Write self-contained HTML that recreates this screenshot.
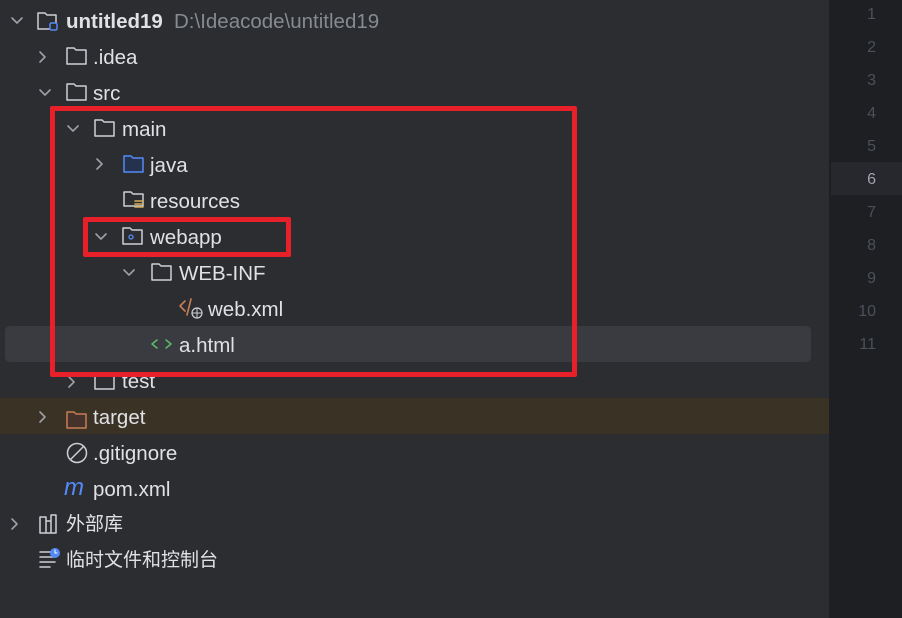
<!DOCTYPE html>
<html><head><style>
body{margin:0;width:902px;height:618px;background:#2b2d30;position:relative;overflow:hidden;font-family:"Liberation Sans","Noto Sans CJK SC",sans-serif;color:#dfe1e5;font-size:20.5px}
.gut{position:absolute;left:829px;top:0;width:73px;height:618px;background:#1e1f22}
.ln{position:absolute;left:829px;width:47px;text-align:right;color:#4b5059;font-size:16px;font-family:"Liberation Sans",sans-serif}
.row{position:absolute;left:0;height:36px;line-height:36px;white-space:nowrap}
.t{position:absolute;top:0}
svg{position:absolute}
</style></head><body>
<div class="gut"></div>
<div style="position:absolute;left:831px;top:162px;width:71px;height:33px;background:#26282e"></div>
<div class="ln" style="top:6px">1</div><div class="ln" style="top:39px">2</div><div class="ln" style="top:72px">3</div><div class="ln" style="top:105px">4</div><div class="ln" style="top:138px">5</div><div class="ln" style="top:171px;color:#a1a3ab">6</div><div class="ln" style="top:204px">7</div><div class="ln" style="top:237px">8</div><div class="ln" style="top:270px">9</div><div class="ln" style="top:303px">10</div><div class="ln" style="top:336px">11</div>
<div style="position:absolute;left:5px;top:326px;width:806px;height:36px;background:#393b40;border-radius:5px"></div>
<div style="position:absolute;left:0;top:398px;width:829px;height:36px;background:#3b3226"></div>

<svg width="829" height="618" style="left:0;top:0" fill="none" stroke-linecap="round" stroke-linejoin="round">
<g stroke="#9da0a8" stroke-width="1.6">
<path d="M12 18l5 5 5-5"/><path d="M40 52l5 5-5 5"/><path d="M40 90l5 5 5-5"/><path d="M68 126l5 5 5-5"/><path d="M97 159l5 5-5 5"/><path d="M96 234l5 5 5-5"/><path d="M124 270l5 5 5-5"/><path d="M69 377l5 5-5 5"/><path d="M40 412l5 5-5 5"/><path d="M12 519l5 5-5 5"/>
</g>
<g stroke="#ced0d6" stroke-width="1.5">
<path d="M38 13h7l2 2h9v14H38z"/>
<path d="M67 48h7l2 2h10v14H67z"/><path d="M67 84h7l2 2h10v14H67z"/>
<path d="M95 120h7l2 2h10v14H95z"/><path d="M124 192h7l2 2h10v12H124z"/><path d="M123 228h7l2 2h10v14H123z"/><path d="M152 264h7l2 2h10v14H152z"/><path d="M95 373h7l2 2h10v14H95z"/>
<circle cx="77" cy="453" r="9.5"/><path d="M71 459l12-12"/>
<path d="M40 517h6v16h-6zM46 521h5v12h-5zM51 515h5v18h-5z"/>
<path d="M40 552h12M40 557h15M40 562h15M40 567h10"/>
</g>
<rect x="50" y="23" width="7" height="7" rx="1.5" stroke="#548af7" stroke-width="1.5" fill="#2b2d30"/>
<path d="M124 156h7l2 2h10v14H124z" stroke="#548af7" stroke-width="1.5" fill="#25324d"/>
<circle cx="131" cy="237" r="2" stroke="#548af7" stroke-width="1.3"/>
<path d="M135 201h8M135 204h8M135 207h8" stroke="#d6ae58" stroke-width="1.6"/>
<path d="M67 412h7l2 2h10v14H67z" stroke="#c77d55" stroke-width="1.5" fill="#45322a"/>
<path d="M185 301l-5 5 5 5M191 299l-4 16" stroke="#c77d55" stroke-width="1.6"/>
<circle cx="197" cy="313" r="5" stroke="#ced0d6" stroke-width="1.2"/><path d="M192 313h10M197 308v10" stroke="#ced0d6" stroke-width="1"/>
<path d="M157 340l-5 4 5 4M166 340l5 4-5 4" stroke="#5fb865" stroke-width="1.6"/>
<circle cx="55" cy="553" r="5" fill="#548af7"/><path d="M55 550v3h2" stroke="#fff" stroke-width="1"/>
</svg>
<div class="row" style="top:4px"><span class="t" style="left:66px;font-weight:bold">untitled19</span><span class="t" style="left:174px;color:#868a91">D:\Ideacode\untitled19</span></div>
<div class="row" style="top:40px"><span class="t" style="left:93px">.idea</span></div>
<div class="row" style="top:76px"><span class="t" style="left:93px">src</span></div>
<div class="row" style="top:112px"><span class="t" style="left:122px">main</span></div>
<div class="row" style="top:148px"><span class="t" style="left:150px">java</span></div>
<div class="row" style="top:184px"><span class="t" style="left:150px">resources</span></div>
<div class="row" style="top:220px"><span class="t" style="left:150px">webapp</span></div>
<div class="row" style="top:256px"><span class="t" style="left:179px">WEB-INF</span></div>
<div class="row" style="top:292px"><span class="t" style="left:208px">web.xml</span></div>
<div class="row" style="top:328px"><span class="t" style="left:179px">a.html</span></div>
<div class="row" style="top:364px"><span class="t" style="left:122px">test</span></div>
<div class="row" style="top:400px"><span class="t" style="left:93px">target</span></div>
<div class="row" style="top:436px"><span class="t" style="left:93px">.gitignore</span></div>
<div class="row" style="top:472px"><span class="t" style="left:93px">pom.xml</span><span class="t" style="left:64px;color:#548af7;font-style:italic;font-size:24px;top:-2px">m</span></div>
<div class="row" style="top:507px;font-size:19px"><span class="t" style="left:66px">外部库</span></div>
<div class="row" style="top:543px;font-size:19px"><span class="t" style="left:66px">临时文件和控制台</span></div>
<div style="position:absolute;left:50px;top:106px;width:517px;height:261px;border:5px solid #e8202a;border-radius:2px"></div>
<div style="position:absolute;left:83px;top:217px;width:198px;height:30px;border:5px solid #e8202a;border-radius:2px"></div>
</body></html>
